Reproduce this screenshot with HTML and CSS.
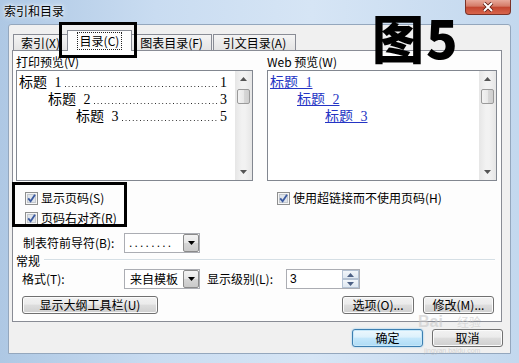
FILE: index.html
```html
<!DOCTYPE html>
<html lang="zh-CN">
<head>
<meta charset="UTF-8" />
<meta name="viewport" content="width=device-width, initial-scale=1" />
<title>索引和目录</title>
<link rel="stylesheet" href="styles.css">
</head>
<body>

<div class="titlebar">
<span class="title">索引和目录</span>
<span class="close-btn">
<svg width="12" height="10" viewBox="0 0 12 10"><path d="M2 1l8 8M10 1l-8 8" stroke="#5a1a10" stroke-width="3.6"/><path d="M2 1l8 8M10 1l-8 8" stroke="#fff" stroke-width="2"/></svg>
</span>
</div>

<div class="client">
<div class="tabs">
<div class="tab t1">索引(X)</div>
<div class="tab active"><span class="focus">目录(C)</span></div>
<div class="tab t3">图表目录(F)</div>
<div class="tab t4">引文目录(A)</div>
</div>

<div class="panel">
<div class="previews">
<div class="col left">
<div class="label">打印预览(V)</div>
<div class="preview">
<div class="preview-body">
<div class="toc-row lv1"><span>标题 1</span><span class="dots"></span><span>1</span></div>
<div class="toc-row lv2"><span>标题 2</span><span class="dots"></span><span>3</span></div>
<div class="toc-row lv3"><span>标题 3</span><span class="dots"></span><span>5</span></div>
</div>
<div class="scrollbar">
<div class="arrow"><svg width="7" height="4" viewBox="0 0 7 4"><path d="M0 4h7L3.5 0z" fill="#555"/></svg></div>
<div class="thumb"></div>
<div class="track"></div>
<div class="arrow"><svg width="7" height="4" viewBox="0 0 7 4"><path d="M0 0h7L3.5 4z" fill="#555"/></svg></div>
</div>
</div>
<div class="check first">
<svg width="13" height="13" viewBox="0 0 13 13"><rect x="0.5" y="0.5" width="12" height="12" fill="#f6f6f6" stroke="#8e8f8f"/><rect x="2.5" y="2.5" width="8" height="8" fill="#dfe4ea" stroke="#c3c8ce"/><path d="M3.2 6.4l2.4 2.8 4.4-6.4" fill="none" stroke="#3b5aa0" stroke-width="1.8"/></svg>
<span>显示页码(S)</span>
</div>
<div class="check">
<svg width="13" height="13" viewBox="0 0 13 13"><rect x="0.5" y="0.5" width="12" height="12" fill="#f6f6f6" stroke="#8e8f8f"/><rect x="2.5" y="2.5" width="8" height="8" fill="#dfe4ea" stroke="#c3c8ce"/><path d="M3.2 6.4l2.4 2.8 4.4-6.4" fill="none" stroke="#3b5aa0" stroke-width="1.8"/></svg>
<span>页码右对齐(R)</span>
</div>
</div>

<div class="col right">
<div class="label">Web 预览(W)</div>
<div class="preview">
<div class="preview-body web">
<div class="web-row lv1"><a>标题 1</a></div>
<div class="web-row lv2"><a>标题 2</a></div>
<div class="web-row lv3"><a>标题 3</a></div>
</div>
<div class="scrollbar">
<div class="arrow"><svg width="7" height="4" viewBox="0 0 7 4"><path d="M0 4h7L3.5 0z" fill="#555"/></svg></div>
<div class="thumb"></div>
<div class="track"></div>
<div class="arrow"><svg width="7" height="4" viewBox="0 0 7 4"><path d="M0 0h7L3.5 4z" fill="#555"/></svg></div>
</div>
</div>
<div class="check first">
<svg width="13" height="13" viewBox="0 0 13 13"><rect x="0.5" y="0.5" width="12" height="12" fill="#f6f6f6" stroke="#8e8f8f"/><rect x="2.5" y="2.5" width="8" height="8" fill="#dfe4ea" stroke="#c3c8ce"/><path d="M3.2 6.4l2.4 2.8 4.4-6.4" fill="none" stroke="#3b5aa0" stroke-width="1.8"/></svg>
<span>使用超链接而不使用页码(H)</span>
</div>
</div>
</div>

<div class="row leader-row">
<span class="lbl">制表符前导符(B):</span>
<div class="combo">
<span class="combo-text leader">........</span>
<span class="drop"><svg width="7" height="4" viewBox="0 0 7 4"><path d="M0 0h7L3.5 4z" fill="#000"/></svg></span>
</div>
</div>

<div class="group">
<span>常规</span>
<span class="line"></span>
</div>

<div class="row format-row">
<span class="lbl">格式(T):</span>
<div class="combo">
<span class="combo-text">来自模板</span>
<span class="drop"><svg width="7" height="4" viewBox="0 0 7 4"><path d="M0 0h7L3.5 4z" fill="#000"/></svg></span>
</div>
<span class="lvl-lbl">显示级别(L):</span>
<div class="spinner">
<span class="spin-text">3</span>
<span class="spin-btns">
<span class="spin"><svg width="7" height="4" viewBox="0 0 7 4"><path d="M0 4h7L3.5 0z" fill="#4d6185"/></svg></span>
<span class="spin"><svg width="7" height="4" viewBox="0 0 7 4"><path d="M0 0h7L3.5 4z" fill="#4d6185"/></svg></span>
</span>
</div>
</div>

<div class="row btn-row">
<button class="btn wide">显示大纲工具栏(U)</button>
<span class="spacer"></span>
<button class="btn">选项(O)...</button>
<button class="btn">修改(M)...</button>
</div>
</div>

<div class="footer">
<button class="btn default">确定</button>
<button class="btn">取消</button>
</div>
</div>

<!-- 标注 -->
<div class="mark mark-tab"></div>
<div class="mark mark-checks"></div>
<div class="note">图5</div>
<div class="watermark"><span class="wm-big">Bai</span><span class="wm-cn">经验</span></div>
<div class="wm-url">jingyan.baidu.com</div>

</body>
</html>
```

FILE: styles.css
```css
body {
  margin: 0;
  width: 519px;
  height: 363px;
  overflow: hidden;
  position: relative;
  background: linear-gradient(90deg, #aec8e4 0%, #c9dcf1 30%, #d6e5f5 60%, #c3d8ee 100%);
  font-family: "Noto Sans CJK SC", "Liberation Sans", sans-serif;
  font-size: 12px;
  line-height: 14px;
  color: #000;
}

/* Title bar */
.titlebar {
  height: 24px;
  display: flex;
  align-items: flex-start;
}
.title {
  margin: 4px 0 0 4px;
  text-shadow: 0 0 6px #fff, 0 0 3px #fff;
}
.close-btn {
  margin-left: auto;
  margin-right: 8px;
  width: 46px;
  height: 15px;
  box-sizing: border-box;
  border: 1px solid #7b3328;
  border-top: none;
  border-radius: 0 0 4px 4px;
  background: linear-gradient(#e8a99b, #d47a66 45%, #c2452f 50%, #d8654c);
  display: flex;
  align-items: center;
  justify-content: center;
}

/* Client area */
.client {
  margin: 0 8px;
  height: 330px;
  box-sizing: border-box;
  background: #f0f0f0;
  border: 1px solid #94a7bd;
  border-radius: 3px 3px 0 0;
  padding: 3px 7px 0 3px;
}

/* Tabs */
.tabs {
  display: flex;
  align-items: flex-end;
  height: 22px;
}
.tab {
  box-sizing: border-box;
  height: 16px;
  border: 1px solid #898c95;
  border-bottom: none;
  background: linear-gradient(#f4f4f4, #e4e4e4);
  display: flex;
  align-items: center;
  justify-content: center;
  padding-top: 1px;
}
.t1 { width: 55px; margin-left: 1px; }
.t3 { width: 81px; margin-left: -1px; }
.t4 { width: 83px; margin-left: 1px; }
.tab.active {
  width: 65px;
  height: 21px;
  margin-left: -1px;
  margin-bottom: -1px;
  background: #fdfdfd;
  position: relative;
  padding-top: 0;
}
.focus {
  outline: 1px dotted #222;
  padding: 1px 2px;
  line-height: 14px;
}

/* Panel */
.panel {
  height: 272px;
  box-sizing: border-box;
  border: 1px solid #898c95;
  background: #fdfdfd;
  margin-right: 1px;
  padding: 4px 4px 0 3px;
}
.previews {
  display: grid;
  grid-template-columns: 237px 230px;
  column-gap: 14px;
}
.label {
  height: 15px;
}
.preview {
  height: 111px;
  box-sizing: border-box;
  border: 1px solid #828790;
  background: #fff;
  display: flex;
}
.preview-body {
  flex: 1;
  padding-top: 3px;
  font-family: "Liberation Serif", "Noto Sans CJK SC", serif;
  font-size: 14px;
  line-height: 17px;
  word-spacing: 4px;
}
.toc-row {
  display: flex;
  align-items: baseline;
  height: 17px;
  padding-right: 8px;
}
.toc-row.lv1 { padding-left: 2px; }
.toc-row.lv2 { padding-left: 31px; }
.toc-row.lv3 { padding-left: 59px; }
.dots {
  flex: 1;
  align-self: flex-end;
  height: 1px;
  margin: 0 1px 4px 3px;
  background: linear-gradient(90deg, #222 1px, transparent 1px) 0 0 / 3.6px 1px repeat-x;
}
.web-row {
  height: 17px;
}
.web-row a {
  color: #2434c4;
  text-decoration: underline;
}
.web-row.lv1 { padding-left: 2px; }
.web-row.lv2 { padding-left: 29px; }
.web-row.lv3 { padding-left: 57px; }

.scrollbar {
  width: 17px;
  background: linear-gradient(90deg, #e6e6e6, #f2f2f2 40%, #f2f2f2 60%, #e6e6e6);
  display: flex;
  flex-direction: column;
}
.arrow {
  height: 16px;
  display: flex;
  align-items: center;
  justify-content: center;
}
.thumb {
  height: 15px;
  margin: 2px 2px 0;
  box-sizing: border-box;
  border: 1px solid #9a9a9a;
  border-radius: 2px;
  background: linear-gradient(90deg, #f3f3f3, #e9e9e9 50%, #d8d8d8 51%, #cfcfcf);
}
.track { flex: 1; }

/* Checkboxes */
.check {
  display: flex;
  align-items: center;
  gap: 3px;
  height: 14px;
  margin-top: 6px;
}
.check.first { margin-top: 10px; }
.left .check { padding-left: 9px; }
.right .check { padding-left: 10px; }

/* Rows */
.row {
  display: flex;
  align-items: center;
}
.leader-row {
  margin-top: 8px;
  height: 20px;
  padding-left: 7px;
}
.leader-row .lbl { width: 101px; }
.format-row {
  margin-top: 1px;
  height: 20px;
  padding-left: 6px;
}
.format-row .lbl { width: 102px; }
.lvl-lbl {
  margin-left: 7px;
  width: 79px;
}

.combo {
  width: 76px;
  height: 20px;
  box-sizing: border-box;
  border: 1px solid #abadb3;
  background: #fff;
  display: flex;
}
.combo-text {
  flex: 1;
  padding-left: 5px;
  line-height: 18px;
}
.combo-text.leader {
  font-family: "Liberation Sans", sans-serif;
  letter-spacing: 2.2px;
  padding-left: 4px;
}
.drop {
  width: 16px;
  box-sizing: border-box;
  border: 1px solid #8a8a8a;
  border-radius: 2px;
  background: linear-gradient(#f3f3f3, #e6e6e6 50%, #d6d6d6 51%, #cacaca);
  display: flex;
  align-items: center;
  justify-content: center;
}

.spinner {
  width: 74px;
  height: 20px;
  box-sizing: border-box;
  border: 1px solid #abadb3;
  background: #fff;
  display: flex;
}
.spin-text {
  flex: 1;
  padding-left: 3px;
  line-height: 18px;
  font-family: "Liberation Sans", sans-serif;
}
.spin-btns {
  width: 17px;
  display: flex;
  flex-direction: column;
}
.spin {
  flex: 1;
  box-sizing: border-box;
  border: 1px solid #b4c2d3;
  background: linear-gradient(#f2f6fa, #dfe8f1);
  display: flex;
  align-items: center;
  justify-content: center;
}

.group {
  margin-top: 1px;
  height: 14px;
  display: flex;
}
.group .line {
  flex: 1;
  height: 0;
  margin: 5px 2px 0 4px;
  border-top: 1px solid #d5dfe5;
  border-bottom: 1px solid #fff;
}

/* Buttons */
.btn {
  height: 18px;
  box-sizing: border-box;
  border: 1px solid #707070;
  border-radius: 3px;
  background: linear-gradient(#f2f2f2, #ebebeb 45%, #dddddd 50%, #cfcfcf);
  box-shadow: inset 0 0 0 1px #fbfbfb;
  font: inherit;
  color: #000;
  padding: 0;
  margin: 0;
  display: flex;
  align-items: center;
  justify-content: center;
}
.btn-row {
  margin-top: 7px;
  height: 18px;
  padding-left: 6px;
  gap: 9px;
}
.btn-row .btn { width: 72px; }
.btn-row .btn:last-child { width: 71px; margin-right: 3px; }
.btn-row .btn.wide { width: 136px; }
.spacer { flex: 1; }

.footer {
  display: flex;
  justify-content: flex-end;
  gap: 9px;
  margin-top: 7px;
}
.footer .btn { width: 71px; }
.btn.default {
  border-color: #3c7fb1;
  background: linear-gradient(#ecf7fd, #dcf1fc 45%, #c4e7fb 50%, #aedcf5);
  box-shadow: inset 0 0 0 1px #c6e7f9, 0 0 2px #7fc2ec;
}

/* Annotations */
.mark {
  position: absolute;
  border: 3px solid #000;
  box-sizing: border-box;
}
.mark-tab {
  left: 59px;
  top: 22px;
  width: 78px;
  height: 36px;
}
.mark-checks {
  left: 12px;
  top: 182px;
  width: 115px;
  height: 45px;
}
.note {
  position: absolute;
  left: 372px;
  top: 4px;
  font-size: 52px;
  line-height: 1.25;
  font-weight: 900;
  letter-spacing: 2px;
}
.watermark {
  position: absolute;
  left: 418px;
  top: 314px;
  color: rgba(200, 200, 200, 0.6);
  line-height: 15px;
  white-space: nowrap;
  pointer-events: none;
}
.wm-big {
  font-family: "Liberation Sans", sans-serif;
  font-weight: bold;
  font-size: 16px;
}
.wm-cn {
  font-size: 12px;
  margin-left: 14px;
}
.wm-url {
  position: absolute;
  left: 424px;
  top: 347px;
  font-family: "Liberation Sans", sans-serif;
  font-size: 7px;
  line-height: 7px;
  color: rgba(190, 190, 190, 0.6);
  white-space: nowrap;
}
```
